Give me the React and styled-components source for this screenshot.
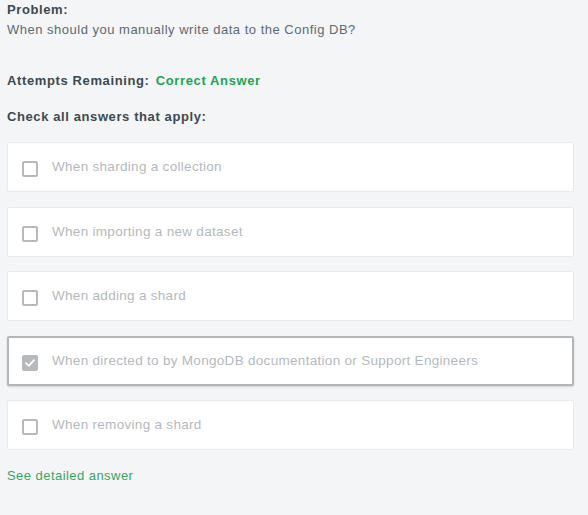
import React from "react";
import styled, {createGlobalStyle} from "styled-components";

const answers = [
    {text: "When sharding a collection", checked: false},
    {text: "When importing a new dataset", checked: false},
    {text: "When adding a shard", checked: false},
    {text: "When directed to by MongoDB documentation or Support Engineers", checked: true},
    {text: "When removing a shard", checked: false},
];

export default function App() {
    return (
        <Wrapper>
            <GlobalStyle />
            {/* question */}
            <Label>Problem:</Label>
            <Question>When should you manually write data to the Config DB?</Question>

            <Attempts>
                Attempts Remaining: <Correct>Correct Answer</Correct>
            </Attempts>

            <Instructions>Check all answers that apply:</Instructions>

            <AnswerList>
                {answers.map((a) => (
                    <Answer key={a.text} selected={a.checked}>
                        <Box checked={a.checked}>
                            {a.checked && (
                                <svg width="10" height="8" viewBox="0 0 10 8">
                                    <path d="M1 4.2 L3.8 6.8 L9 1.2" fill="none" stroke="#fff" strokeWidth="1.8" strokeLinecap="round" strokeLinejoin="round" />
                                </svg>
                            )}
                        </Box>
                        <AnswerText>{a.text}</AnswerText>
                    </Answer>
                ))}
            </AnswerList>

            <DetailLink href="#">See detailed answer</DetailLink>
        </Wrapper>
    );
}

const GlobalStyle = createGlobalStyle`
body {
    margin: 0;
    background: #f4f5f7;
    font-family: "Liberation Sans", Arial, sans-serif;
}
`;

const Wrapper = styled.div`
padding: 0 14px 0 7px;
font-size: 13px;
line-height: 20px;
letter-spacing: 0.5px;
`;

const Label = styled.div`
font-weight: bold;
color: #3d4950;
letter-spacing: 0.6px;
`;

const Question = styled.div`
color: #5d6a72;
`;

const Attempts = styled.div`
margin-top: 31px;
font-weight: bold;
color: #3d4950;
letter-spacing: 0.62px;
`;

const Correct = styled.span`
color: #1fa352;
margin-left: 2px;
`;

const Instructions = styled.div`
margin-top: 16px;
font-weight: bold;
color: #3d4950;
letter-spacing: 0.6px;
`;

const AnswerList = styled.div`
margin-top: 15px;
display: flex;
flex-direction: column;
gap: 14.5px;
letter-spacing: 0.3px;
`;

const Answer = styled.div`
height: 50px;
box-sizing: border-box;
display: flex;
align-items: center;
background: #fff;
border: ${(p) => (p.selected ? "2px solid #b3b7ba" : "1px solid #e8eaec")};
border-radius: 2px;
padding-left: ${(p) => (p.selected ? "13px" : "14px")};
box-shadow: ${(p) => (p.selected ? "0 1px 2px rgba(0,0,0,0.15)" : "none")};
`;

const Box = styled.span`
width: 16px;
height: 16px;
box-sizing: border-box;
border-radius: 2px;
border: 2px solid #b6babd;
background: ${(p) => (p.checked ? "#b6babd" : "#fff")};
display: flex;
align-items: center;
justify-content: center;
margin-top: 4px;
margin-right: 14px;
`;

const AnswerText = styled.span`
color: #b4b9bd;
font-size: 13.5px;
`;

const DetailLink = styled.a`
display: block;
margin-top: 16px;
color: #3aa562;
text-decoration: none;
letter-spacing: 0.45px;
`;
